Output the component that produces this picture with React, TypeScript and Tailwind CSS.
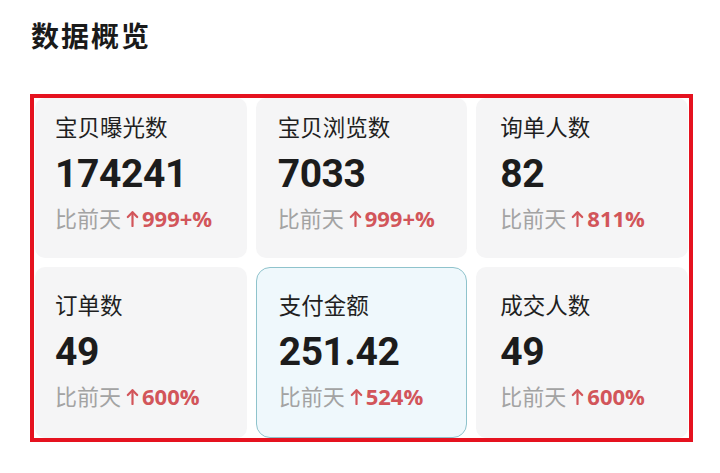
import React from "react";

type Item = { label: string; value: string; pct: string; active?: boolean };

const items: Item[] = [
  { label: "宝贝曝光数", value: "174241", pct: "999+%" },
  { label: "宝贝浏览数", value: "7033", pct: "999+%" },
  { label: "询单人数", value: "82", pct: "811%" },
  { label: "订单数", value: "49", pct: "600%" },
  { label: "支付金额", value: "251.42", pct: "524%", active: true },
  { label: "成交人数", value: "49", pct: "600%" },
];

const padCls = ["pl-[20px]", "pl-[22px]", "pl-[24px]"];

function Arrow() {
  return (
    <svg width="13" height="17" viewBox="0 0 13 17" className="ml-[5px] mr-[3px] mt-[1px]" fill="none">
      <path d="M6.5 16V2.5" stroke="#d2555a" strokeWidth="2.2" strokeLinecap="round" />
      <path d="M1.8 7L6.5 2.2L11.2 7" stroke="#d2555a" strokeWidth="2.2" strokeLinecap="round" strokeLinejoin="round" />
    </svg>
  );
}

export default function App() {
  return (
    <div
      className="w-[720px] h-[473px] bg-white overflow-hidden"
      style={{ fontFamily: '"Noto Sans", "Noto Sans CJK SC", sans-serif' }}
    >
      <div className="pl-[31px] pt-[15px] h-[78px]">
        <h1 className="text-[28px] leading-[42px] font-bold text-[#1a1a1a] tracking-[2px]">数据概览</h1>
      </div>
      <div className="ml-[30px] mt-[16px] w-[663px] h-[348px] border-[4px] border-[#e5121f] grid grid-cols-3 grid-rows-[160px_171px] gap-x-[9px] gap-y-[9px] pl-[1px] pr-[1px] pt-0">
        {items.map((it, i) => (
          <div
            key={it.label}
            className={
              (it.active
                ? "rounded-[14px] border border-[#8fc3cc] bg-[#eff8fc] "
                : "rounded-[10px] bg-[#f5f5f6] ") +
              "flex flex-col justify-center " +
              (i < 3 ? "pb-[10px] " : "pb-[4px] ") +
              (it.active ? "pl-[22px]" : padCls[i % 3])
            }
          >
            <div className="text-[22.5px] leading-[30px] text-[#1f1f1f]">{it.label}</div>
            <div
              className="mt-[11px] text-[39px] leading-[40px] font-bold text-[#1c1c1c] tracking-[-0.4px]"
              style={{ fontFamily: 'Roboto, "Noto Sans", sans-serif' }}
            >
              {it.value}
            </div>
            <div className="mt-[9px] flex items-center text-[22px] leading-[30px]">
              <span className="text-[#a3a3a3]">比前天</span>
              <Arrow />
              <span
                className="text-[#d2555a] text-[22px] font-bold"
                style={{ fontFamily: '"Open Sans", "Noto Sans", sans-serif' }}
              >
                {it.pct}
              </span>
            </div>
          </div>
        ))}
      </div>
    </div>
  );
}
